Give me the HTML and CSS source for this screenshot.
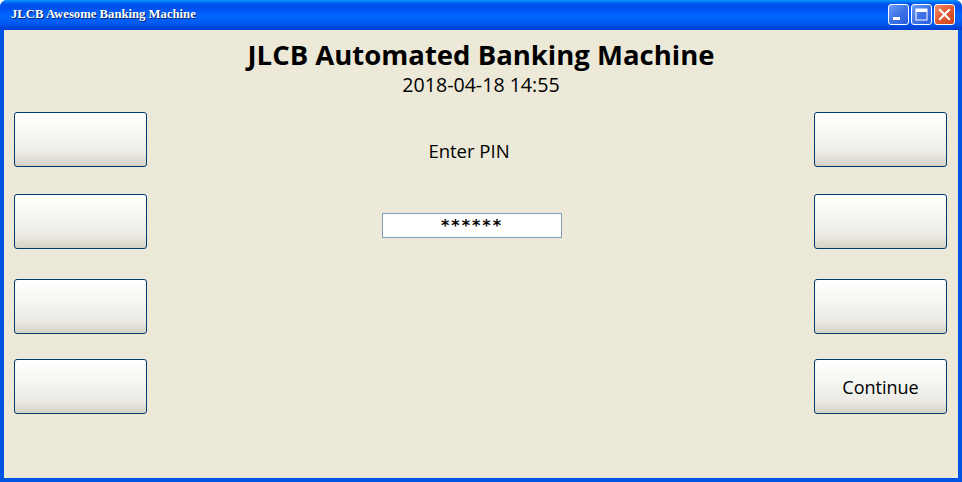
FILE: index.html
```html
<!DOCTYPE html>
<html>
<head>
<meta charset="utf-8">
<link rel="stylesheet" href="styles.css">
</head>
<body>
<div class="window">
  <div class="titlebar">
    <span class="title">JLCB Awesome Banking Machine</span>
    <div class="controls">
      <span class="ctl min"><svg width="21" height="21" viewBox="0 0 21 21"><rect x="5" y="13" width="7" height="3" fill="#fff"/></svg></span>
      <span class="ctl max"><svg width="21" height="21" viewBox="0 0 21 21"><rect x="5" y="5" width="11" height="11" fill="none" stroke="#fff" stroke-width="1"/><rect x="5" y="5" width="11" height="3" fill="#fff"/></svg></span>
      <span class="ctl close"><svg width="21" height="21" viewBox="0 0 21 21"><path d="M6 6 L15 15 M15 6 L6 15" stroke="#fff" stroke-width="2.2" stroke-linecap="square"/></svg></span>
    </div>
  </div>
  <div class="client">
    <header class="head">
      <h1 class="heading">JLCB Automated Banking Machine</h1>
      <div class="date">2018-04-18 14:55</div>
    </header>
    <div class="body">
      <div class="col">
        <button class="key k1"></button>
        <button class="key k2"></button>
        <button class="key k3"></button>
        <button class="key k4"></button>
      </div>
      <div class="center">
        <div class="prompt">Enter PIN</div>
        <div class="pin">******</div>
      </div>
      <div class="col">
        <button class="key k1"></button>
        <button class="key k2"></button>
        <button class="key k3"></button>
        <button class="key k4">Continue</button>
      </div>
    </div>
  </div>
</div>
</body>
</html>
```
FILE: styles.css
```css
html, body {
  margin: 0;
  padding: 0;
  background: #ffffff;
}
.window {
  width: 962px;
  height: 482px;
  box-sizing: border-box;
  display: flex;
  flex-direction: column;
  background: #0054e3;
  border-radius: 7px 7px 0 0;
  overflow: hidden;
}
.titlebar {
  height: 30px;
  flex: none;
  display: flex;
  align-items: center;
  justify-content: space-between;
  padding: 0 7px 0 11px;
  background: linear-gradient(to bottom, #0997ff 0px, #0053ee 4px, #0050ee 8px, #0066ff 16px, #0058f0 24px, #0043d8 28px, #003dd7 30px);
}
.title {
  color: #fff;
  font-family: "Liberation Serif", serif;
  font-weight: bold;
  font-size: 12.7px;
  text-shadow: 1px 1px 0 #0a1f6e;
  margin-top: -2px;
}
.controls {
  display: flex;
  gap: 2px;
  margin-top: -1px;
}
.ctl {
  width: 21px;
  height: 21px;
  box-sizing: border-box;
  border: 1px solid #fff;
  border-radius: 3px;
  display: block;
  overflow: hidden;
  background: linear-gradient(135deg, #6d9cf8 0%, #3f73e6 50%, #2a5de0 100%);
}
.ctl svg { display: block; margin: -1px; }
.ctl.close {
  background: linear-gradient(135deg, #f0926a 0%, #e2582f 50%, #cc4418 100%);
}
.client {
  flex: 1;
  margin: 0 4px 4px 4px;
  background: #ece9d8;
  display: flex;
  flex-direction: column;
  font-family: "Open Sans", sans-serif;
  color: #000;
}
.head {
  text-align: center;
  padding-top: 7px;
}
.heading {
  margin: 0;
  font-size: 27.5px;
  font-weight: 700;
  line-height: 36px;
}
.date {
  font-size: 19.6px;
  line-height: 23px;
}
.body {
  display: flex;
  justify-content: space-between;
  padding: 16px 11px 0 10px;
}
.col {
  display: flex;
  flex-direction: column;
}
.key {
  width: 133px;
  height: 55px;
  border: 1px solid #003c74;
  border-radius: 3px;
  background: linear-gradient(to bottom, #ffffff 0%, #f6f6f2 40%, #ecebe5 75%, #d6d2c6 100%);
  font-family: "Open Sans", sans-serif;
  font-size: 18px;
  color: #000;
  padding: 0;
}
.k2 { margin-top: 27px; }
.k3 { margin-top: 30px; }
.k4 { margin-top: 25px; }
.center {
  flex: 1;
  display: flex;
  flex-direction: column;
  align-items: center;
  padding-right: 17px;
}
.prompt {
  font-size: 18.5px;
  line-height: 24px;
  margin-top: 27px;
  margin-right: 6px;
}
.pin {
  margin-top: 50px;
  width: 180px;
  height: 25px;
  box-sizing: border-box;
  background: #fff;
  border: 1px solid #7f9db9;
  text-align: center;
  font-family: "DejaVu Sans", sans-serif;
  font-weight: bold;
  font-size: 16px;
  letter-spacing: 2px;
  line-height: 24px;
}
```
